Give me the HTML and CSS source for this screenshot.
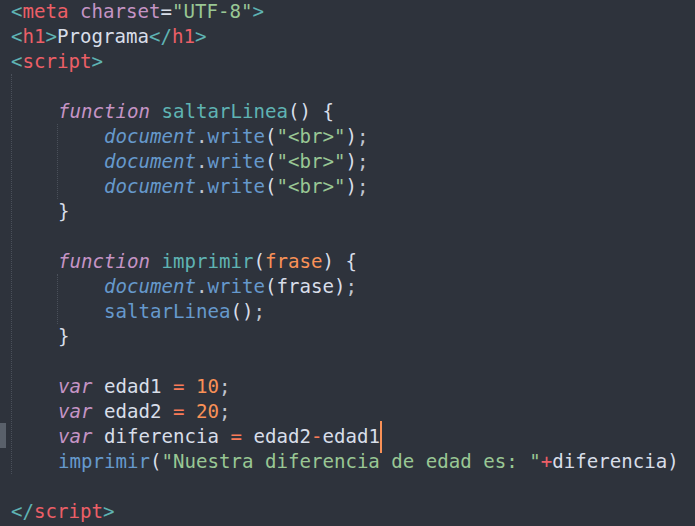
FILE: index.html
```html
<!DOCTYPE html>
<html>
<head>
<meta charset="UTF-8">
<link rel="stylesheet" href="styles.css">
</head>
<body>
<div class="editor">
<div class="line"><span class="br">&lt;</span><span class="tag">meta</span> <span class="attr">charset</span>=<span class="str">"UTF-8"</span><span class="br">&gt;</span></div>
<div class="line"><span class="br">&lt;</span><span class="tag">h1</span><span class="br">&gt;</span>Programa<span class="br">&lt;/</span><span class="tag">h1</span><span class="br">&gt;</span></div>
<div class="line"><span class="br">&lt;</span><span class="tag">script</span><span class="br">&gt;</span></div>
<div class="guide">
<div class="line"> </div>
<div class="line">    <span class="kw">function</span> <span class="fn">saltarLinea</span>() {</div>
<div class="guide inner">
<div class="line">    <span class="obj">document</span><span class="pn">.</span><span class="call">write</span>(<span class="str">"&lt;br&gt;"</span>)<span class="pn">;</span></div>
<div class="line">    <span class="obj">document</span><span class="pn">.</span><span class="call">write</span>(<span class="str">"&lt;br&gt;"</span>)<span class="pn">;</span></div>
<div class="line">    <span class="obj">document</span><span class="pn">.</span><span class="call">write</span>(<span class="str">"&lt;br&gt;"</span>)<span class="pn">;</span></div>
</div>
<div class="line">    }</div>
<div class="line"> </div>
<div class="line">    <span class="kw">function</span> <span class="fn">imprimir</span>(<span class="param">frase</span>) {</div>
<div class="guide inner">
<div class="line">    <span class="obj">document</span><span class="pn">.</span><span class="call">write</span>(frase)<span class="pn">;</span></div>
<div class="line">    <span class="call">saltarLinea</span>()<span class="pn">;</span></div>
</div>
<div class="line">    }</div>
<div class="line"> </div>
<div class="line">    <span class="kw">var</span> edad1 <span class="op">=</span> <span class="num">10</span><span class="pn">;</span></div>
<div class="line">    <span class="kw">var</span> edad2 <span class="op">=</span> <span class="num">20</span><span class="pn">;</span></div>
<div class="line current">    <span class="kw">var</span> diferencia <span class="op">=</span> edad2<span class="op">-</span>edad1<span class="cursor"></span></div>
<div class="line">    <span class="call">imprimir</span>(<span class="str">"Nuestra diferencia de edad es: "</span><span class="plus">+</span>diferencia)</div>
</div>
<div class="line"> </div>
<div class="line"><span class="br">&lt;/</span><span class="tag">script</span><span class="br">&gt;</span></div>
</div>
</body>
</html>
```
FILE: styles.css
```css
html, body {
  margin: 0;
  padding: 0;
  background: #2e333c;
  overflow: hidden;
}
.editor {
  position: relative;
  width: 695px;
  height: 527px;
  margin-top: -1px;
  overflow: hidden;
  padding-left: 11px;
  box-sizing: border-box;
  font-family: "DejaVu Sans Mono", "Liberation Mono", monospace;
  font-size: 19.1px;
  line-height: 25px;
  color: #d8dee9;
}
.line {
  height: 25px;
  white-space: pre;
}
.guide {
  border-left: 1px dotted #4a505a;
}
.guide.inner {
  margin-left: 45px;
}
.br { color: #5fb3b3; }
.tag { color: #ec5f67; }
.attr { color: #c594c5; }
.str { color: #99c794; }
.kw { color: #c594c5; font-style: italic; }
.fn { color: #5fb3b3; }
.obj { color: #6699cc; font-style: italic; }
.call { color: #6699cc; }
.pn { color: #c0c5ce; }
.param { color: #f99157; }
.num { color: #f99157; }
.op { color: #f97b58; }
.plus { color: #ec5f67; }
.current::before {
  content: "";
  position: absolute;
  left: 0;
  width: 6px;
  height: 25px;
  margin-top: -1px;
  background: #59606a;
}
.cursor {
  position: relative;
}
.cursor::after {
  content: "";
  position: absolute;
  left: 0;
  top: -4px;
  width: 2px;
  height: 32px;
  background: #f99157;
}
```
